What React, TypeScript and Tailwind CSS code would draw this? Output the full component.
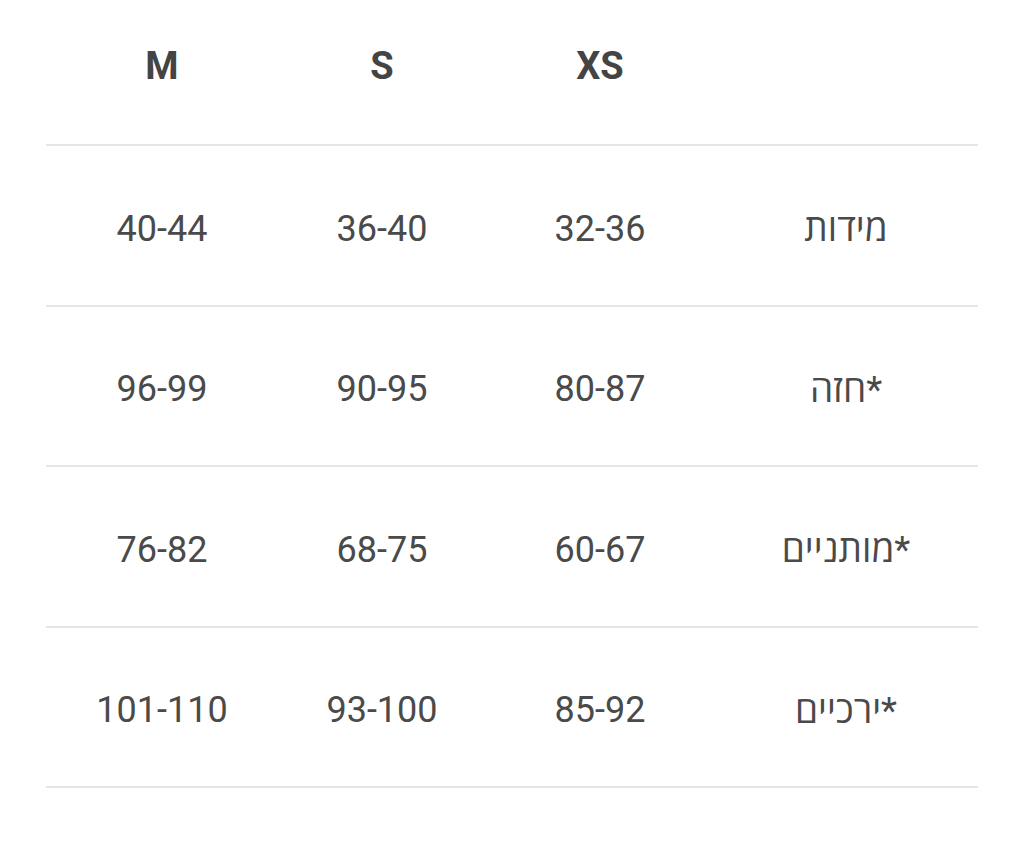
import React from 'react';

const sizes = ['XS', 'S', 'M'];

const rows = [
  { label: 'מידות', values: ['32-36', '36-40', '40-44'] },
  { label: '*חזה', values: ['80-87', '90-95', '96-99'] },
  { label: '*מותניים', values: ['60-67', '68-75', '76-82'] },
  { label: '*ירכיים', values: ['85-92', '93-100', '101-110'] },
];

const cols = 'grid grid-cols-[264px_228px_208px_232px]';

export default function App() {
  return (
    <div
      dir="rtl"
      className="min-h-[846px] bg-white px-[46px] text-[#4a4a4a]"
      style={{ fontFamily: 'Roboto, "Open Sans", "DejaVu Sans", sans-serif' }}
    >
      {/* header */}
      <div className={`${cols} h-[146px] items-center border-b-2 border-[#e6e6e6] pb-[11px]`}>
        <div />
        {sizes.map((s) => (
          <div key={s} className="text-center text-[38px] font-bold text-[#444]">
            {s}
          </div>
        ))}
      </div>

      {rows.map((row) => (
        <div key={row.label} className={`${cols} h-[160.5px] items-center border-b-2 border-[#e6e6e6] pt-[7px]`}>
          <div className="text-center text-[37px]">{row.label}</div>
          {row.values.map((v) => (
            <div key={v} dir="ltr" className="text-center text-[36px]">
              {v}
            </div>
          ))}
        </div>
      ))}
    </div>
  );
}
